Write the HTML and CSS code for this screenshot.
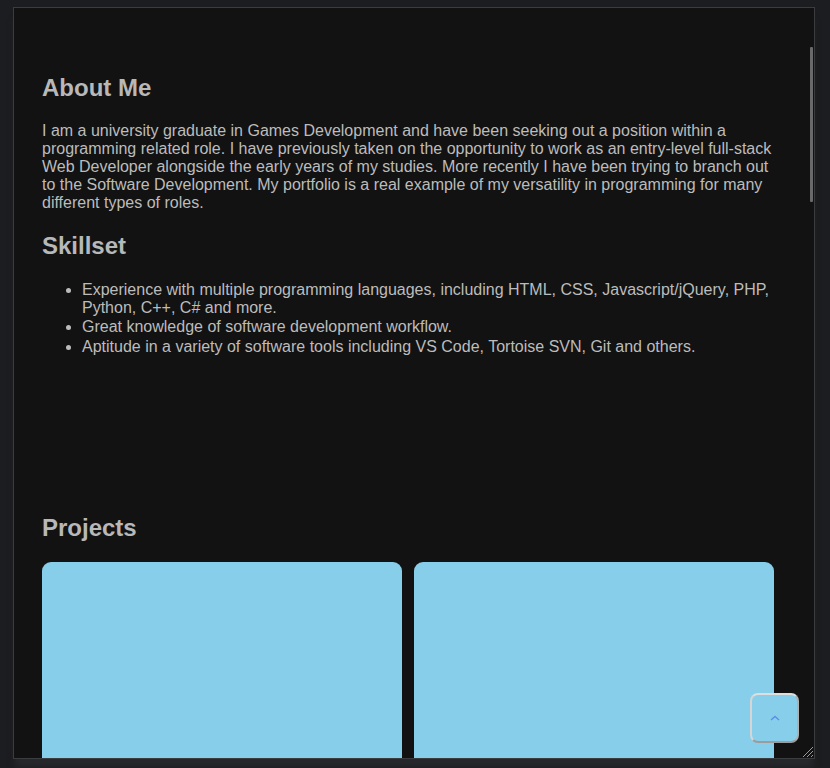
FILE: index.html
```html
<!DOCTYPE html>
<html lang="en">
<head>
<meta charset="utf-8">
<title>Portfolio</title>
<link rel="stylesheet" href="styles.css">
</head>
<body>
<div class="frame">
  <div class="content">
    <section class="about">
      <h2>About Me</h2>
      <p>I am a university graduate in Games Development and have been seeking out a position within a programming related role. I have previously taken on the opportunity to work as an entry-level full-stack Web Developer alongside the early years of my studies. More recently I have been trying to branch out to the Software Development. My portfolio is a real example of my versatility in programming for many different types of roles.</p>
      <h2>Skillset</h2>
      <ul>
        <li>Experience with multiple programming languages, including HTML, CSS, Javascript/jQuery, PHP, Python, C++, C# and more.</li>
        <li>Great knowledge of software development workflow.</li>
        <li>Aptitude in a variety of software tools including VS Code, Tortoise SVN, Git and others.</li>
      </ul>
    </section>
    <section class="projects">
      <h2>Projects</h2>
      <div class="cards">
        <div class="card"></div>
        <div class="card"></div>
      </div>
    </section>
  </div>
  <div class="thumb"></div>
  <button class="to-top" aria-label="Back to top">
    <svg width="10" height="6" viewBox="0 0 10 6"><path d="M1 5 L5 1.5 L9 5" fill="none" stroke="#5b8fe6" stroke-width="1.4"/></svg>
  </button>
  <svg class="grip" width="13" height="13" viewBox="0 0 13 13">
    <path d="M12 2 L2 12 M12 6 L6 12 M12 10 L10 12" stroke="#9a9a9a" stroke-width="1"/>
  </svg>
</div>
</body>
</html>
```
FILE: styles.css
```css
html, body {
  margin: 0;
  padding: 0;
}
body {
  background: #1c1d20;
  height: 768px;
  overflow: hidden;
  font-family: "Liberation Sans", Arial, sans-serif;
}
.frame {
  position: relative;
  box-sizing: border-box;
  margin: 7px 0 0 13px;
  width: 802px;
  height: 752px;
  border: 1px solid #3b3c3f;
  background: #121212;
  overflow: hidden;
  box-shadow: 0 10px 6px -2px #27282b;
}
.content {
  padding: 46px 40px 0 28px;
  color: #bcbcbc;
}
h2 {
  font-size: 24px;
  font-weight: bold;
  margin: 19.92px 0;
  color: #b8b8b8;
}
p {
  font-size: 16px;
  margin: 16px 0;
}
ul {
  font-size: 16px;
  margin: 16px 0;
  padding: 1px 0 0 40px;
}
li {
  margin-bottom: 1.5px;
}
.projects {
  padding-top: 122.5px;
}
.projects h2 {
  margin-bottom: 20px;
}
.cards {
  display: grid;
  grid-template-columns: 1fr 1fr;
  gap: 12px;
}
.card {
  height: 260px;
  background: #87ceeb;
  border-radius: 9px;
}
.thumb {
  position: absolute;
  right: 1px;
  top: 39px;
  width: 3px;
  height: 155px;
  background: #6a6a6a;
  border-radius: 1px;
}
.to-top {
  position: absolute;
  left: 736px;
  top: 685px;
  width: 49px;
  height: 50px;
  box-sizing: border-box;
  background: #87ceeb;
  border: 2px solid;
  border-color: #dedede #b0b0b0 #9c9c9c #d6d6d6;
  border-radius: 8px;
  padding: 0;
  display: flex;
  align-items: center;
  justify-content: center;
}
.grip {
  position: absolute;
  right: 0;
  bottom: 0;
}
```
